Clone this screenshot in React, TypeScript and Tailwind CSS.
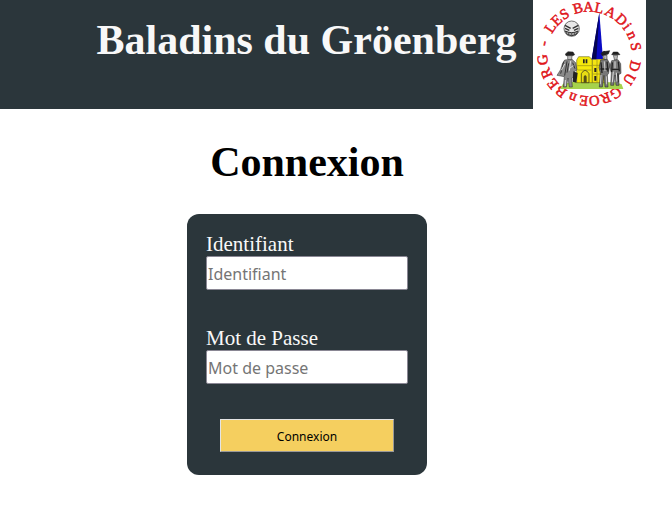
import React from "react";

const ring: [string, number][] = [
  ["L", -56], ["E", -44], ["S", -32],
  ["B", -14], ["A", -1], ["L", 12], ["A", 27], ["D", 43], ["i", 54], ["n", 66], ["S", 81],
  ["D", 105], ["U", 122],
  ["G", 146], ["R", 160], ["O", 174], ["E", 187], ["n", 201], ["B", 217], ["E", 231], ["R", 246], ["G", 263],
  ["-", 283],
];

function Logo() {
  return (
    <svg
      viewBox="15 0 339 327"
      role="img"
      aria-label="Les Baladins du Groenberg"
      className="block h-[109px] w-[113px] shrink-0 bg-white"
    >
      <g fill="#e0161b" fontFamily="'Liberation Serif', serif" fontSize="44" textAnchor="middle" stroke="#e0161b" strokeWidth="1.5">
        {ring.map(([letter, angle], i) => (
          <text key={i} x="184" y="35" transform={`rotate(${angle} 184 162)`}>
            {letter}
          </text>
        ))}
      </g>

      {/* mask */}
      <g fill="none" stroke="#333" strokeWidth="3">
        <circle cx="131" cy="86" r="23" fill="#e8e8e8" strokeWidth="2" />
        <path d="M111 76l17 9M151 76l-17 9M111 85l13 6M151 85l-13 6" strokeWidth="4" />
        <path d="M112 93q19 10 38 0l-6 11q-13 6-26 0z" fill="#aaa" strokeWidth="3" />
        <path d="M122 96v9M131 98v9M140 96v9" strokeWidth="2" />
      </g>

      {/* hill */}
      <path d="M96 267l9-16 28-5 130 1 18 6 5 14z" fill="#a6d24d" />

      {/* church */}
      <path d="M146 180l6-10h32l9 10v68h-47z" fill="#f4e90c" stroke="#55500a" strokeWidth="1.5" />
      <path d="M193 174h35v74h-35z" fill="#f4e414" stroke="#55500a" strokeWidth="1.5" />
      <path d="M148 197h44M150 210h40M195 196h30M195 222h30M207 178v70" stroke="#958c14" strokeWidth="2" />
      <path d="M165 178h5v12h-5zM173 178h5v12h-5zM199 204h6v12h-6zM199 228h6v14h-6z" fill="#222" />
      <path d="M160 248v-27q11-20 23 0v27z" fill="#e8dc14" stroke="#222" strokeWidth="2" />
      <path d="M167 248v-18q5-8 9 0v18z" fill="#555014" />
      <path d="M214 38l11 140h-34z" fill="#0a0ac4" />
      <path d="M214 38l-9 140h-14z" fill="#050550" />

      {/* cloaked man */}
      <g stroke="#222" strokeWidth="1.5">
        <path d="M112 162l8-7 15 1 5 8-6 3-20 0z" fill="#222" />
        <path d="M119 167h13l-1 12-6 4-6-5z" fill="#bbb" />
        <path d="M110 180l22-2 11 10 4 22-7 4-3 18-6 2 2 27h-9l-4-27-5 27h-9l3-31-22-4q14-18 16-34z" fill="#8a8a8a" />
        <path d="M107 185l-9 36M117 184l-7 43M122 190l-5 28M134 188l7 18" stroke="#333" strokeWidth="3" />
        <path d="M128 183l-4 29M136 197l-10 7M100 211l10-19M112 240v18" stroke="#ddd" strokeWidth="3" />
      </g>
      <path d="M136 214l13 5-4 29-11-3z" fill="#222" />

      {/* man with feathered hat */}
      <g stroke="#1c1c1c" strokeWidth="1.5">
        <path d="M219 161q5-10 14-7l12-2-4 10-17 6z" fill="#222" />
        <path d="M226 166h11v11l-7 5z" fill="#bbb" />
        <path d="M218 180l20-2 7 13-3 29-4 5 2 36h-9l-3-35-5 35h-9l3-42-4-16z" fill="#777" />
        <path d="M219 187l3 32M237 185l3 30M217 207h25" stroke="#222" strokeWidth="4" />
        <path d="M229 184l2 29M219 225l-2 28M235 229l1 24" stroke="#ccc" strokeWidth="3" />
      </g>

      {/* man with staff */}
      <g stroke="#1c1c1c" strokeWidth="1.5">
        <path d="M251 164l5-8h13l7 8z" fill="#222" />
        <path d="M256 166h13l-2 12-7 3z" fill="#bbb" />
        <path d="M251 182l19-3 8 12 1 29-7 4 1 32h-9l-3-31-4 31h-9l2-37-5-18z" fill="#777" />
        <path d="M253 187l-2 29M271 185l3 29M252 208h23M270 220v27" stroke="#222" strokeWidth="4" />
        <path d="M261 184v21M256 215l-3 32M265 218l2 27" stroke="#ddd" strokeWidth="3" />
      </g>
    </svg>
  );
}

function Field({ id, label, placeholder, type }: { id: string; label: string; placeholder: string; type: string }) {
  return (
    <div className="flex flex-col">
      <label htmlFor={id} className="pt-px text-[21px] leading-6 text-[#f8f8f8]">
        {label}
      </label>
      <input
        id={id}
        type={type}
        placeholder={placeholder}
        className="h-[34px] w-full rounded-[2px] border border-[#8a8794] bg-white px-px pt-0.5 font-['Noto_Sans',sans-serif] text-base text-black placeholder:text-[#757575]"
      />
    </div>
  );
}

export default function App() {
  return (
    <div className="font-['Liberation_Serif',serif]">
      <header className="flex items-start bg-[#2b363b] pr-[26px]">
        <h1 className="flex-1 pt-4 pl-20 text-center text-[42px] leading-12 font-bold text-[#f8f8f8]">
          Baladins du Gröenberg
        </h1>
        <Logo />
      </header>
      <main className="flex flex-col items-center pt-[29px] pr-[58px]">
        <h2 className="text-[42px] leading-12 font-bold text-black">Connexion</h2>
        <form
          className="mt-7 flex w-60 flex-col gap-[35px] rounded-xl bg-[#2b363b] px-[19px] pt-[17px] pb-[23px]"
          onSubmit={(e) => e.preventDefault()}
        >
          <Field id="identifiant" label="Identifiant" placeholder="Identifiant" type="text" />
          <Field id="motdepasse" label="Mot de Passe" placeholder="Mot de passe" type="password" />
          <button
            type="submit"
            className="mx-[14px] h-[33px] border border-t-[#e4e4e4] border-r-[#999] border-b-[#999] border-l-[#e4e4e4] bg-[#f5cf5f] pt-0.5 font-['Noto_Sans',sans-serif] text-xs text-black"
          >
            Connexion
          </button>
        </form>
      </main>
    </div>
  );
}
